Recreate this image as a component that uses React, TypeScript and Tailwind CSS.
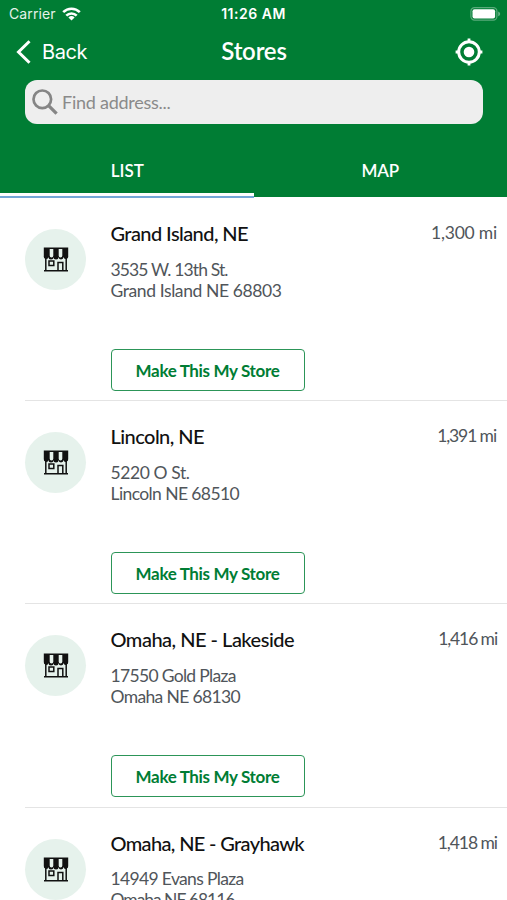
import React from 'react';

const stores = [
  {
    name: 'Grand Island, NE',
    nameClass: 'tracking-[-0.58px]',
    street: '3535 W. 13th St.',
    streetClass: 'tracking-[-0.87px]',
    city: 'Grand Island NE 68803',
    cityClass: 'tracking-[-0.4px]',
    distance: '1,300 mi',
    distanceClass: 'tracking-[-0.2px]',
  },
  {
    name: 'Lincoln, NE',
    nameClass: 'tracking-[-0.55px]',
    street: '5220 O St.',
    streetClass: 'tracking-[-0.4px]',
    city: 'Lincoln NE 68510',
    cityClass: 'tracking-[-0.6px]',
    distance: '1,391 mi',
    distanceClass: 'tracking-[-1.1px] pr-[11px]',
  },
  {
    name: 'Omaha, NE - Lakeside',
    nameClass: 'tracking-[-0.5px]',
    street: '17550 Gold Plaza',
    streetClass: 'tracking-[-0.68px]',
    city: 'Omaha NE 68130',
    cityClass: 'tracking-[-0.65px]',
    distance: '1,416 mi',
    distanceClass: 'tracking-[-1.1px]',
  },
  {
    name: 'Omaha, NE - Grayhawk',
    nameClass: 'tracking-[-0.65px]',
    street: '14949 Evans Plaza',
    streetClass: 'tracking-[-0.65px]',
    city: 'Omaha NE 68116',
    cityClass: 'tracking-[-1.05px]',
    distance: '1,418 mi',
    distanceClass: 'tracking-[-1.05px]',
  },
];

const WifiIcon = () => (
  <svg width="19" height="14" viewBox="0 0 19 14" fill="none" stroke="#fff" strokeWidth="2.6">
    <path d="M1.2 5.2a11.8 11.8 0 0 1 16.6 0" />
    <path d="M4.3 8.6a7.4 7.4 0 0 1 10.4 0" />
    <path d="M9.5 13.6 6.4 10.4a4.5 4.5 0 0 1 6.2 0z" fill="#fff" stroke="none" />
  </svg>
);

const BatteryIcon = () => (
  <svg width="31" height="14" viewBox="0 0 31 14" fill="none">
    <rect x="0.9" y="0.7" width="26" height="12.4" rx="3.6" stroke="#fff" strokeOpacity="0.35" strokeWidth="1.2" />
    <rect x="2.5" y="2.3" width="22.6" height="9.2" rx="2" fill="#fff" />
    <path d="M28.2 4.6c1.2.4 1.9 1.3 1.9 2.3s-.7 1.9-1.9 2.3z" fill="#fff" fillOpacity="0.4" />
  </svg>
);

const TargetIcon = () => (
  <svg width="28" height="28" viewBox="0 0 28 28" fill="none">
    <circle cx="14" cy="14" r="10.3" stroke="#fff" strokeWidth="3" />
    <circle cx="14" cy="14" r="5.3" fill="#fff" />
    <path d="M14 .6v3M14 24.4v3M.6 14h3M24.4 14h3" stroke="#fff" strokeWidth="2.8" />
  </svg>
);

const StoreIcon = () => (
  <svg width="26" height="25" viewBox="0 0 26 25" fill="none" stroke="#111" strokeWidth="1.5">
    <path
      d="M.8.5h24.4v8.6a2.3 2.3 0 0 1-4.7.8 2.4 2.4 0 0 1-5 0 2.4 2.4 0 0 1-5 0 2.4 2.4 0 0 1-5 0A2.3 2.3 0 0 1 .8 9.1z"
      fill="#111"
      stroke="none"
    />
    <path d="M6.7 2h3.6v6.8a1.8 1.8 0 0 1-3.6 0zM15.7 2h3.6v6.8a1.8 1.8 0 0 1-3.6 0z" fill="#e6f2ec" stroke="none" />
    <path d="M2.8 11v12.4M23.2 11v12.4M1 23.8h24" />
    <path d="M6 14h4.8v4.6H6z" />
    <path d="M15 23.5v-8h4.8v8" />
  </svg>
);

export default function App() {
  return (
    <div className="h-[900px] w-[507px] overflow-hidden bg-white font-['Lato',sans-serif] text-[#111]">
      <header className="flex h-[197px] flex-col bg-[#007d34] text-white">
        <div className="grid h-[27px] grid-cols-3 items-center pl-[9px] pr-[6px] font-['Inter',sans-serif] text-[14px]">
          <div className="flex items-center gap-[6px]">
            <span className="text-[#e5f2ea] tracking-[0.1px]">Carrier</span>
            <WifiIcon />
          </div>
          <span className="pr-[3px] text-center text-[14px] font-semibold tracking-[0.5px]">11:26 AM</span>
          <div className="flex justify-end">
            <BatteryIcon />
          </div>
        </div>

        <div className="grid h-[53px] grid-cols-3 items-center pb-[4px] pl-[16px] pr-[24px]">
          <button className="flex items-center gap-[11px]">
            <svg width="15" height="24" viewBox="0 0 15 24" fill="none" stroke="#fff" strokeWidth="3">
              <path d="M13.5 1.2 2.5 12l11 10.8" />
            </svg>
            <span className="pt-px font-['Inter',sans-serif] text-[20px] tracking-[-0.4px]">Back</span>
          </button>
          <h1 className="pb-[2px] pl-[9px] text-center text-[24px] font-semibold tracking-[-0.2px]">Stores</h1>
          <button className="flex justify-end">
            <TargetIcon />
          </button>
        </div>

        <div className="ml-[25px] flex h-[44px] w-[458px] shrink-0 items-center gap-[4px] rounded-[12px] bg-[#eee] pl-[7px] text-[#8a8a8a]">
          <svg width="26" height="26" viewBox="0 0 26 26" fill="none" stroke="#858585" strokeWidth="2.7">
            <circle cx="10.3" cy="10.3" r="8.8" />
            <path d="m16.6 16.6 8 8" strokeWidth="3.2" />
          </svg>
          <span className="text-[18px] tracking-[-0.25px]">Find address...</span>
        </div>

        <nav className="grid h-[73px] grid-cols-2 text-[17px] font-semibold">
          <div className="flex flex-col items-center">
            <span className="h-[68.5px] pt-[34px] pl-px">LIST</span>
            <span className="h-[3.5px] w-full shrink-0 bg-white" />
            <span className="h-[2px] w-full shrink-0 bg-[#74a8d8]" />
          </div>
          <span className="pt-[34px] text-center tracking-[-0.1px]">MAP</span>
        </nav>
      </header>

      <main className="pt-px">
        {stores.map((store) => (
          <section key={store.name} className="ml-[25px] flex h-[203.2px] border-b border-[#e4e4e4]">
            <div className="mt-[31px] flex size-[61px] shrink-0 items-center justify-center rounded-full bg-[#e6f2ec]">
              <StoreIcon />
            </div>
            <div className="ml-[24.5px] flex-1 pt-[22px]">
              <h2 className={`text-[20px] leading-[26px] font-medium ${store.nameClass}`}>{store.name}</h2>
              <p className="mt-[12.5px] text-[17.5px] leading-[21px] text-[#50555a]">
                <span className={store.streetClass}>{store.street}</span>
                <br />
                <span className={store.cityClass}>{store.city}</span>
              </p>
              <button className="mt-[48.5px] h-[42px] w-[194px] rounded-[4px] border-[1.5px] border-[#2c9558] pt-px text-[17px] font-bold tracking-[-0.35px] text-[#007d34]">
                Make This My Store
              </button>
            </div>
            <span className={`pt-[24px] pr-[10px] text-[17.5px] leading-[22px] text-[#50555a] ${store.distanceClass}`}>
              {store.distance}
            </span>
          </section>
        ))}
      </main>
    </div>
  );
}
